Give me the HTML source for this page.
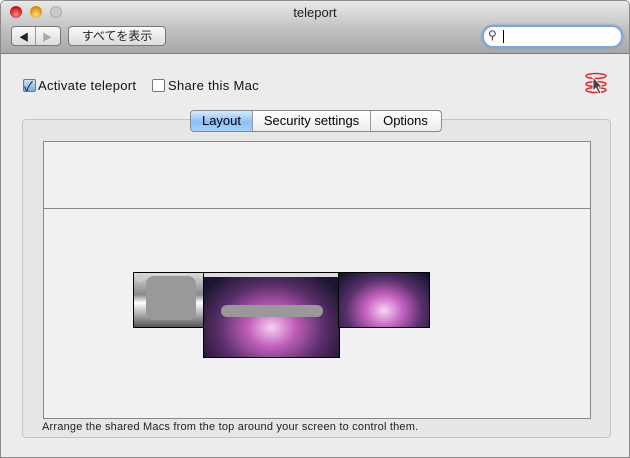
<!DOCTYPE html>
<html><head><style>
body{margin:0;width:630px;height:458px;background:#fff;font-family:"Liberation Sans","Noto Sans CJK JP",sans-serif;overflow:hidden;position:relative}
.win{position:absolute;left:0;top:0;width:628px;height:456px;border:1px solid #8a8a8a;background:#ececec;border-radius:5px 5px 0 0;overflow:hidden}
.tb{position:absolute;left:0;top:0;width:628px;height:52px;background:linear-gradient(#e9e9e9,#bdbdbd 60%,#a8a8a8);border-bottom:1px solid #7a7a7a}
.dot{position:absolute;top:5px;width:12px;height:12px;border-radius:50%}
.abs{position:absolute}
.btn{position:absolute;background:linear-gradient(#fafafa,#dcdcdc);border:1px solid #777;border-radius:4px}
.cb{position:absolute;width:11px;height:11px;border:1px solid #777;border-radius:2px;background:#fff}
</style></head><body>
<div class="win">
<div class="tb">
 <div class="dot" style="left:9px;background:radial-gradient(circle at 50% 70%,#f88,#c11 70%)"></div>
 <div class="dot" style="left:29px;background:radial-gradient(circle at 50% 70%,#fd8,#d80 70%)"></div>
 <div class="dot" style="left:49px;background:#c9c9c9;border:1px solid #aaa;width:10px;height:10px"></div>
 <div class="abs" style="left:0;width:628px;top:4px;text-align:center;font-size:13px;color:#222">teleport</div>
 <div class="btn" style="left:10px;top:25px;width:48px;height:18px"><div class="abs" style="left:23px;top:0;width:1px;height:18px;background:#999"></div><span class="abs" style="left:7px;top:2px;font-size:10px;color:#222">◀</span><span class="abs" style="left:30px;top:2px;font-size:10px;color:#aaa">▶</span></div>
 <div class="btn" style="left:67px;top:25px;width:96px;height:18px;font-size:12px;text-align:center;line-height:18px;color:#222">すべてを表示</div>
 <div class="abs" style="left:481px;top:24px;width:137px;height:19px;border:2px solid #7da7d9;border-radius:11px;background:#fff;box-shadow:0 0 2px #6a9ad6"><span class="abs" style="left:4px;top:1px;font-size:12px;color:#444">⚲</span><div class="abs" style="left:19px;top:3px;width:1px;height:13px;background:#000"></div></div>
</div>
<div class="cb" style="left:22px;top:78px;background:linear-gradient(#cfe2f8,#7aa8e0)"><span class="abs" style="left:0;top:-4px;font-size:13px;color:#123">✓</span></div>
<div class="abs" style="left:37px;top:77px;font-size:13px;color:#111;letter-spacing:0.3px">Activate teleport</div>
<div class="cb" style="left:151px;top:78px"></div>
<div class="abs" style="left:167px;top:77px;font-size:13px;color:#111;letter-spacing:0.3px">Share this Mac</div>
<svg class="abs" style="left:582px;top:70px" width="30" height="30"><g fill="none" stroke="#e22" stroke-width="1.5"><ellipse cx="13" cy="5" rx="10" ry="2.5"/><ellipse cx="13" cy="13" rx="10" ry="2.5"/><ellipse cx="13" cy="19" rx="10" ry="2.5"/></g><path d="M10 6 L10 20 L13 17 L16 23 L18 22 L15 16 L19 16Z" fill="#444" stroke="#fff" stroke-width=".8"/></svg>
<div class="abs" style="left:21px;top:118px;width:587px;height:317px;border:1px solid #c4c4c4;border-radius:4px;background:#e6e6e6"></div>
<div class="abs" style="left:189px;top:109px;width:250px;height:20px;border:1px solid #888;border-radius:4px;background:linear-gradient(#fff,#ececec);font-size:13px;line-height:20px;overflow:hidden">
 <div class="abs" style="left:0;top:0;width:61px;height:20px;background:linear-gradient(#d7ebff,#8cc0f5 55%,#a7d2fb);text-align:center">Layout</div>
 <div class="abs" style="left:61px;top:0;width:117px;height:20px;border-left:1px solid #999;border-right:1px solid #999;text-align:center">Security settings</div>
 <div class="abs" style="left:179px;top:0;width:71px;text-align:center">Options</div>
</div>
<div class="abs" style="left:42px;top:140px;width:546px;height:276px;border:1px solid #888;background:#f1f1f1"></div>
<div class="abs" style="left:43px;top:207px;width:546px;height:1px;background:#888"></div>
<div class="abs" style="left:132px;top:271px;width:70px;height:54px;border:1px solid #000;background:linear-gradient(#ddd,#888 40%,#fff 55%,#555)"></div>
<div class="abs" style="left:145px;top:275px;width:50px;height:44px;background:#999;border-radius:8px"></div>
<div class="abs" style="left:135px;top:273px;width:8px;height:8px;border-radius:50%;background:#ccc"></div>
<div class="abs" style="left:202px;top:271px;width:135px;height:84px;border:1px solid #000;background:radial-gradient(ellipse at 50% 65%,#f6d0f0,#c05fbb 25%,#5a2f6a 55%,#1a1530 85%)"></div>
<div class="abs" style="left:203px;top:272px;width:134px;height:4px;background:#ddd"></div>
<div class="abs" style="left:220px;top:304px;width:102px;height:12px;border-radius:6px;background:#999"></div>
<div class="abs" style="left:337px;top:271px;width:90px;height:54px;border:1px solid #000;background:radial-gradient(ellipse at 50% 70%,#f7d6f4,#c461c0 30%,#56306a 60%,#151530 95%)"></div>
<div class="abs" style="left:41px;top:420px;font-size:11px;color:#222;letter-spacing:0.2px">Arrange the shared Macs from the top around your screen to control them.</div>
</div>
</body></html>
